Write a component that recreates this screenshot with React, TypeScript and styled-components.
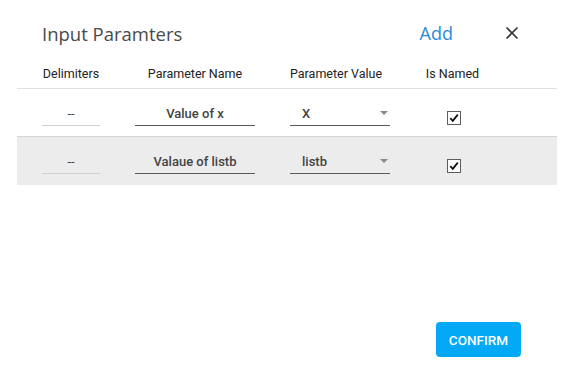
import React from 'react';
import styled, {createGlobalStyle} from 'styled-components';

const Global = createGlobalStyle`
  html, body {
    margin: 0;
    padding: 0;
    background: #fff;
  }
  body {
    font-family: Roboto, "Liberation Sans", sans-serif;
    color: #333;
  }
`;

const Dialog = styled.div`
  width: 575px;
  height: 389px;
  box-sizing: border-box;
  padding: 0 18px 32px 17px;
  display: flex;
  flex-direction: column;
`;

const Header = styled.div`
  display: flex;
  align-items: center;
  height: 28px;
  margin-top: 19px;
  margin-bottom: 11px;
  padding-left: 25px;
`;

const Title = styled.h2`
  margin: 0;
  flex: 1;
  font-family: "Open Sans", "Noto Sans", sans-serif;
  font-weight: 400;
  font-size: 18.5px;
  color: #4a4a4a;
`;

const AddLink = styled.a`
  font-family: "Open Sans", "Noto Sans", sans-serif;
  font-size: 18px;
  color: #2a8ad8;
  cursor: pointer;
  margin-right: 52px;
`;

const CloseButton = styled.button`
  border: none;
  background: none;
  padding: 0;
  width: 14px;
  height: 14px;
  margin-right: 38px;
  display: flex;
  cursor: pointer;
`;

// 表格
const Grid = styled.div`
  display: grid;
  grid-template-columns: 108px 140px 140px 95px 1fr;
`;

const HeadRow = styled(Grid)`
  height: 30px;
  align-items: center;
  border-bottom: 1px solid #e0e0e0;
  font-size: 12.5px;
  color: #222;
`;

const Row = styled(Grid)<{ $shaded?: boolean }>`
  height: 47px;
  align-items: center;
  background: ${p => (p.$shaded ? '#ececec' : '#fff')};
  border-bottom: 1px solid ${p => (p.$shaded ? '#ececec' : '#d4d4d4')};
`;

const Cell = styled.div<{ $align?: 'center' | 'left' }>`
  display: flex;
  justify-content: ${p => (p.$align === 'left' ? 'flex-start' : 'center')};
  padding-left: ${p => (p.$align === 'left' ? '25px' : '0')};
`;

const TextInput = styled.div<{ $width: number; $muted?: boolean }>`
  width: ${p => p.$width}px;
  height: 25px;
  box-sizing: border-box;
  display: flex;
  align-items: center;
  justify-content: center;
  border-bottom: 1px solid ${p => (p.$muted ? '#cfcfcf' : '#5a5a5a')};
  font-size: 13px;
  font-weight: ${p => (p.$muted ? 400 : 500)};
  color: #444;
  margin-top: 2px;
`;

const Select = styled.div`
  width: 100px;
  height: 25px;
  box-sizing: border-box;
  display: flex;
  align-items: center;
  justify-content: space-between;
  padding: 0 2px 0 12px;
  border-bottom: 1px solid #5a5a5a;
  font-size: 13px;
  font-weight: 500;
  color: #444;
  margin-top: 2px;
`;

const Caret = styled.span`
  width: 0;
  height: 0;
  border-left: 4px solid transparent;
  border-right: 4px solid transparent;
  border-top: 4px solid #888;
`;

const Check = styled.span`
  width: 14px;
  height: 14px;
  box-sizing: border-box;
  border: 1.5px solid #5d5d5d;
  display: flex;
  align-items: center;
  justify-content: center;
  background: #fff;
  margin: 10px 0 0 2px;
`;

const Footer = styled.div`
  margin-top: auto;
  display: flex;
  justify-content: flex-end;
  padding-right: 36px;
`;

const Confirm = styled.button`
  width: 85px;
  height: 35px;
  border: none;
  border-radius: 4px;
  background: #03a9f4;
  color: #fff;
  font-family: Roboto, "Liberation Sans", sans-serif;
  font-size: 13.5px;
  font-weight: 500;
  cursor: pointer;
`;

const params = [
    {name: 'Value of x', value: 'X'},
    {name: 'Valaue of listb', value: 'listb'},
];

function CheckBox() {
    return (
        <Check>
            <svg width="10" height="10" viewBox="0 0 10 10">
                <path d="M1.2 5.2 L3.8 7.8 L8.8 1.6" fill="none" stroke="#111" strokeWidth="1.8"/>
            </svg>
        </Check>
    );
}

export default function App() {
    return (
        <Dialog>
            <Global/>
            <Header>
                <Title>Input Paramters</Title>
                <AddLink>Add</AddLink>
                <CloseButton aria-label="close">
                    <svg width="14" height="14" viewBox="0 0 14 14">
                        <path d="M1.5 1.5 L12.5 12.5 M12.5 1.5 L1.5 12.5" stroke="#333" strokeWidth="1.6"/>
                    </svg>
                </CloseButton>
            </Header>
            <HeadRow>
                <Cell>Delimiters</Cell>
                <Cell>Parameter Name</Cell>
                <Cell $align="left">Parameter Value</Cell>
                <Cell>Is Named</Cell>
                <div/>
            </HeadRow>
            {params.map((p, i) =>
                <Row key={p.name} $shaded={i % 2 === 1}>
                    <Cell><TextInput $width={58} $muted>--</TextInput></Cell>
                    <Cell><TextInput $width={120}>{p.name}</TextInput></Cell>
                    <Cell $align="left"><Select>{p.value}<Caret/></Select></Cell>
                    <Cell><CheckBox/></Cell>
                    <div/>
                </Row>
            )}
            <Footer>
                <Confirm>CONFIRM</Confirm>
            </Footer>
        </Dialog>
    );
}
